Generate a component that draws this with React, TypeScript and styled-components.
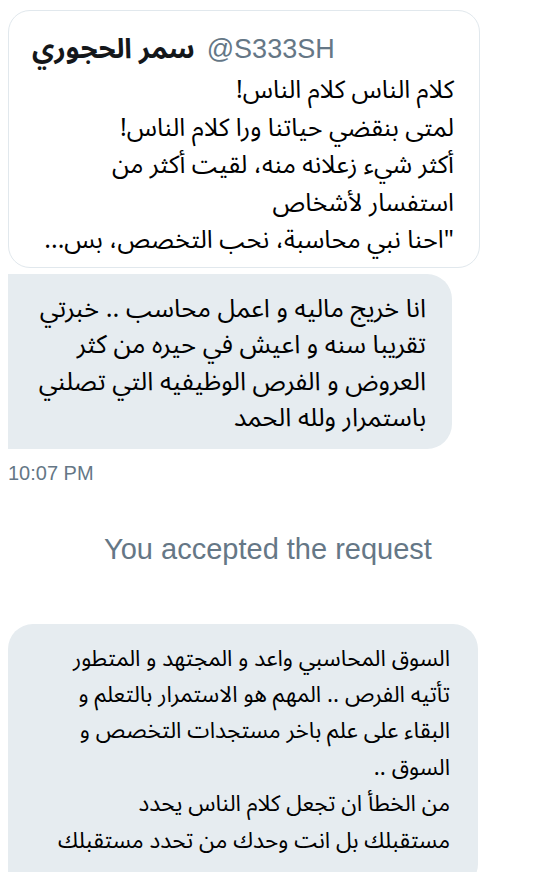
import styled, { createGlobalStyle } from "styled-components"

const GlobalStyle = createGlobalStyle`
  html, body {
    margin: 0;
    padding: 0;
    background: #ffffff;
  }
  body {
    font-family: "Liberation Sans", Arial, sans-serif;
  }
`

const arabicFont = `"Noto Sans Arabic", "Noto Naskh Arabic", "DejaVu Sans", sans-serif`

const Thread = styled.div`
  width: 546px;
  height: 872px;
  overflow: hidden;
  padding: 10px 0 0 8px;
  box-sizing: border-box;
  display: flex;
  flex-flow: column;
  align-items: flex-start;
`

const QuoteCard = styled.div`
  width: 472px;
  box-sizing: border-box;
  border: 1px solid #e1e8ed;
  border-radius: 22px;
  padding: 21px 25px 7px 23px;
  display: flex;
  flex-flow: column;
  gap: 6px;
  background: #ffffff;
`

const QuoteHeader = styled.div`
  display: flex;
  align-items: center;
  gap: 12px;
  height: 34px;
  direction: ltr;
  white-space: nowrap;
`

const DisplayName = styled.span`
  font-family: ${arabicFont};
  font-weight: bold;
  font-size: 27.5px;
  color: #14171a;
`

const Handle = styled.span`
  font-family: "Liberation Sans", Arial, sans-serif;
  font-size: 27px;
  color: #657786;
`

const TextBlock = styled.div<{ $lineHeight: number; $size: number }>`
  direction: rtl;
  text-align: right;
  font-family: ${arabicFont};
  font-size: ${(p) => p.$size}px;
  line-height: ${(p) => p.$lineHeight}px;
  color: #000000;
`

const Line = styled.div`
  white-space: nowrap;
`

const Bubble = styled.div<{ $width: number; $topLeft: number; $pad: string }>`
  width: ${(p) => p.$width}px;
  box-sizing: border-box;
  background: #e6ecf0;
  border-radius: ${(p) => p.$topLeft}px 25px 25px 0;
  padding: ${(p) => p.$pad};
  flex-shrink: 0;
`

const Timestamp = styled.div`
  margin-top: 12px;
  font-size: 20px;
  line-height: 24px;
  color: #657786;
`

const SystemNote = styled.div`
  align-self: stretch;
  margin: 47px 0 0 -8px;
  padding-right: 10px;
  text-align: center;
  font-size: 29px;
  line-height: 34px;
  color: #657786;
`

const quoteLines = [
  "كلام الناس كلام الناس!",
  "لمتى بنقضي حياتنا ورا كلام الناس!",
  "أكثر شيء زعلانه منه، لقيت أكثر من",
  "استفسار لأشخاص",
  "\"احنا نبي محاسبة، نحب التخصص، بس...",
]

const firstReply = [
  "انا خريج ماليه و اعمل محاسب .. خبرتي",
  "تقريبا سنه و اعيش في حيره من كثر",
  "العروض و الفرص الوظيفيه التي تصلني",
  "باستمرار ولله الحمد",
]

const secondReply = [
  "السوق المحاسبي واعد و المجتهد و المتطور",
  "تأتيه الفرص .. المهم هو الاستمرار بالتعلم و",
  "البقاء على علم باخر مستجدات التخصص و",
  "السوق ..",
  "من الخطأ ان تجعل كلام الناس يحدد",
  "مستقبلك بل انت وحدك من تحدد مستقبلك",
]

export default function App() {
  return (
    <>
      <GlobalStyle />
      <Thread>
        <QuoteCard>
          <QuoteHeader>
            <DisplayName dir="rtl">سمر الحجوري</DisplayName>
            <Handle>@S333SH</Handle>
          </QuoteHeader>
          <TextBlock $lineHeight={37.5} $size={25}>
            {quoteLines.map((l) => (
              <Line key={l}>{l}</Line>
            ))}
          </TextBlock>
        </QuoteCard>

        <Bubble $width={444} $topLeft={0} $pad="17px 26px 12px 20px" style={{ marginTop: 6 }}>
          <TextBlock $lineHeight={36.5} $size={25.5}>
            {firstReply.map((l) => (
              <Line key={l}>{l}</Line>
            ))}
          </TextBlock>
        </Bubble>

        <Timestamp>10:07 PM</Timestamp>

        <SystemNote>You accepted the request</SystemNote>

        <Bubble $width={470} $topLeft={25} $pad="17px 28px 30px 20px" style={{ marginTop: 58 }}>
          <TextBlock $lineHeight={36.4} $size={22.5}>
            {secondReply.map((l) => (
              <Line key={l}>{l}</Line>
            ))}
          </TextBlock>
        </Bubble>
      </Thread>
    </>
  )
}
